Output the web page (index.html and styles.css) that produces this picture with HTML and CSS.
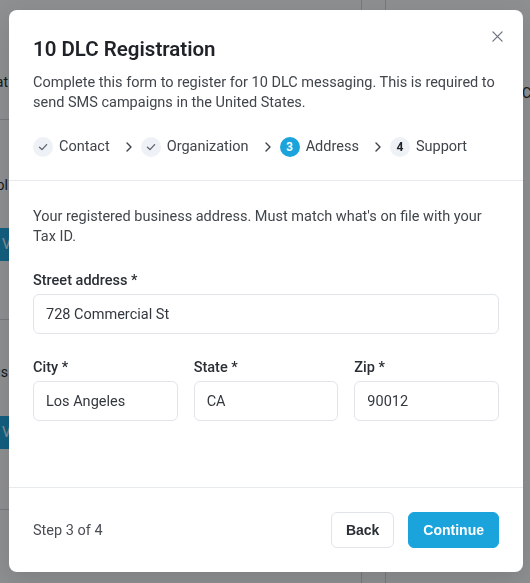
FILE: index.html
```html
<!DOCTYPE html>
<html lang="en">
<head>
<meta charset="utf-8">
<title>10 DLC Registration</title>
<link rel="stylesheet" href="styles.css">
</head>
<body>
<div class="page">
  <div class="col-a">
    <div class="row row-1"><div class="snip">Format</div></div>
    <div class="row row-2"><div class="snip">Tool</div><div class="bg-btn">Vo</div></div>
    <div class="row row-3"><div class="snip">Status</div><div class="bg-btn">Vo</div></div>
    <div class="row row-4"></div>
  </div>
  <div class="col-b"></div>
  <div class="col-c"><span class="bg-word">Co</span></div>
</div>

<div class="overlay">
  <div class="modal" role="dialog" aria-labelledby="dlg-title">
    <header class="modal-head">
      <button class="close" aria-label="Close">
        <svg width="12" height="12" viewBox="0 0 12 12"><path d="M1 1L11 11M11 1L1 11" stroke="#6b7280" stroke-width="1.4" stroke-linecap="round" fill="none"/></svg>
      </button>
      <h1 id="dlg-title" class="title">10 DLC Registration</h1>
      <p class="desc">Complete this form to register for 10 DLC messaging. This is required to send SMS campaigns in the United States.</p>
      <ol class="steps">
        <li class="step done">
          <span class="dot"><svg width="10" height="10" viewBox="0 0 10 10"><path d="M1.5 5.2L4 7.6L8.6 2.6" stroke="#5b6470" stroke-width="1.3" fill="none" stroke-linecap="round" stroke-linejoin="round"/></svg></span>
          <span class="label">Contact</span>
        </li>
        <li class="chev"><svg width="16" height="16" viewBox="0 0 16 16"><path d="M6 4L10 8L6 12" stroke="#3d434a" stroke-width="1.4" fill="none" stroke-linecap="round" stroke-linejoin="round"/></svg></li>
        <li class="step done">
          <span class="dot"><svg width="10" height="10" viewBox="0 0 10 10"><path d="M1.5 5.2L4 7.6L8.6 2.6" stroke="#5b6470" stroke-width="1.3" fill="none" stroke-linecap="round" stroke-linejoin="round"/></svg></span>
          <span class="label">Organization</span>
        </li>
        <li class="chev"><svg width="16" height="16" viewBox="0 0 16 16"><path d="M6 4L10 8L6 12" stroke="#3d434a" stroke-width="1.4" fill="none" stroke-linecap="round" stroke-linejoin="round"/></svg></li>
        <li class="step active">
          <span class="dot">3</span>
          <span class="label">Address</span>
        </li>
        <li class="chev"><svg width="16" height="16" viewBox="0 0 16 16"><path d="M6 4L10 8L6 12" stroke="#3d434a" stroke-width="1.4" fill="none" stroke-linecap="round" stroke-linejoin="round"/></svg></li>
        <li class="step todo">
          <span class="dot">4</span>
          <span class="label">Support</span>
        </li>
      </ol>
    </header>

    <section class="modal-body">
      <p class="intro">Your registered business address. Must match what's on file with your Tax ID.</p>
      <div class="field">
        <label class="field-label">Street address *</label>
        <div class="input">728 Commercial St</div>
      </div>
      <div class="field-row">
        <div class="field">
          <label class="field-label">City *</label>
          <div class="input">Los Angeles</div>
        </div>
        <div class="field">
          <label class="field-label">State *</label>
          <div class="input">CA</div>
        </div>
        <div class="field">
          <label class="field-label">Zip *</label>
          <div class="input">90012</div>
        </div>
      </div>
    </section>

    <footer class="modal-foot">
      <span class="step-count">Step 3 of 4</span>
      <div class="actions">
        <button class="btn btn-secondary">Back</button>
        <button class="btn btn-primary">Continue</button>
      </div>
    </footer>
  </div>
</div>
</body>
</html>
```

FILE: styles.css
```css
* { box-sizing: border-box; }

html, body {
  margin: 0;
  padding: 0;
  width: 530px;
  height: 583px;
  overflow: hidden;
  font-family: Roboto, "Noto Sans", "Liberation Sans", sans-serif;
  background: #ffffff;
}

/* ---- background page (under overlay) ---- */
.page {
  display: flex;
  height: 583px;
  background: #ffffff;
  color: #222;
  font-size: 14px;
}
.col-a {
  width: 362px;
  border-right: 1px solid #d4d7db;
  display: flex;
  flex-direction: column;
}
.row {
  border-bottom: 1px solid #d4d7db;
  display: flex;
  flex-direction: column;
}
.row-1 { height: 120px; padding-top: 72px; }
.row-2 { height: 200px; padding-top: 55px; }
.row-3 { height: 190px; padding-top: 42px; }
.row-4 { flex: 1; border-bottom: none; }
.snip {
  width: 8px;
  overflow: hidden;
  display: flex;
  justify-content: flex-end;
  white-space: nowrap;
  line-height: 20px;
}
.bg-btn {
  margin-top: 33px;
  width: 60px;
  height: 33px;
  background: #1aa5dd;
  color: #fff;
  border-radius: 0 4px 4px 0;
  line-height: 33px;
  padding-left: 2px;
  font-size: 14px;
}
.row-3 .bg-btn { margin-top: 34px; }
.col-b {
  width: 24px;
  border-right: 1px solid #d4d7db;
}
.col-c {
  flex: 1;
  padding-top: 83px;
  padding-left: 136px;
  white-space: nowrap;
  overflow: hidden;
  font-size: 14px;
  line-height: 20px;
}

/* ---- overlay & modal ---- */
.overlay {
  position: fixed;
  inset: 0;
  background: rgba(12, 16, 22, 0.47);
  padding: 10px 7px 11px 9px;
  display: flex;
}
.modal {
  position: relative;
  width: 514px;
  height: 562px;
  background: #ffffff;
  border-radius: 8px;
  box-shadow: 0 8px 24px rgba(0, 0, 0, 0.12);
  display: flex;
  flex-direction: column;
  color: #3c4147;
}

.modal-head {
  padding: 25px 24px 23px;
  border-bottom: 1px solid #e8ebee;
}
.close {
  position: absolute;
  top: 19px;
  right: 19px;
  width: 14px;
  height: 14px;
  padding: 1px;
  border: none;
  background: none;
  display: flex;
  align-items: center;
  justify-content: center;
}
.close svg { width: 11px; height: 11px; }
.title {
  margin: 0;
  font-size: 20.5px;
  line-height: 28px;
  font-weight: 600;
  color: #1f2328;
}
.desc {
  margin: 10px 0 0;
  font-size: 14.5px;
  line-height: 20px;
  color: #41464c;
}

.steps {
  list-style: none;
  margin: 24px 0 0;
  padding: 0;
  display: flex;
  align-items: center;
  height: 20px;
}
.step {
  display: flex;
  align-items: center;
  gap: 6px;
}
.dot {
  width: 20px;
  height: 20px;
  border-radius: 50%;
  background: #eef1f5;
  display: flex;
  align-items: center;
  justify-content: center;
  font-size: 12px;
  font-weight: 700;
  color: #1f2328;
}
.step.active .dot {
  background: #1ba4dc;
  color: #ffffff;
}
.label {
  font-size: 14.5px;
  line-height: 20px;
  color: #40454b;
}
.chev {
  display: flex;
  margin: 0 4px 0 11px;
}

.modal-body {
  flex: 1;
  padding: 26px 24px 0;
  border-bottom: 1px solid #e8ebee;
}
.intro {
  margin: 0 0 24px;
  font-size: 14.5px;
  line-height: 20px;
  color: #41464c;
}
.field {
  display: flex;
  flex-direction: column;
  gap: 3px;
}
.field-label {
  font-size: 14.5px;
  line-height: 20px;
  font-weight: 500;
  color: #2a2f35;
}
.input {
  height: 40px;
  border: 1px solid #e1e5ea;
  border-radius: 6px;
  padding: 0 12px;
  display: flex;
  align-items: center;
  font-size: 14.5px;
  color: #33383e;
  background: #fff;
}
.field-row {
  margin-top: 24px;
  display: grid;
  grid-template-columns: repeat(3, 1fr);
  gap: 16px;
}

.modal-foot {
  padding: 24px;
  display: flex;
  align-items: center;
  justify-content: space-between;
}
.step-count {
  font-size: 14.5px;
  color: #4a4f55;
}
.actions {
  display: flex;
  gap: 14px;
}
.btn {
  height: 36px;
  padding: 0 14px;
  border-radius: 6px;
  font-family: "Liberation Sans", Arial, sans-serif;
  font-size: 14px;
  font-weight: 700;
  cursor: pointer;
}
.btn-secondary {
  background: #ffffff;
  border: 1px solid #e1e5ea;
  color: #2a2f35;
}
.btn-primary {
  background: #1ba4dc;
  border: 1px solid #1ba4dc;
  color: #ffffff;
}
```
